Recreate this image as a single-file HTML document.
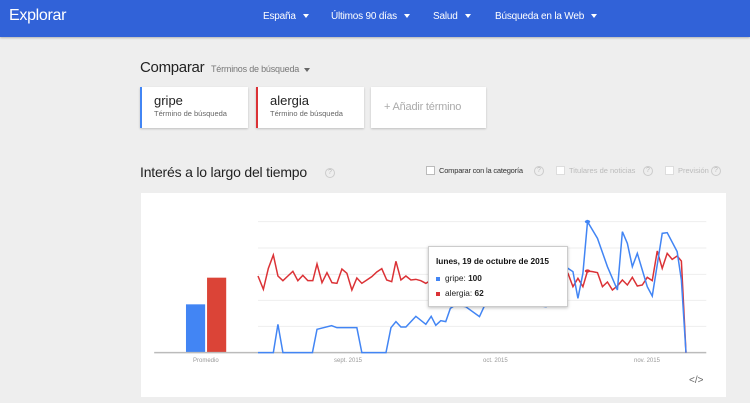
<!DOCTYPE html>
<html><head><meta charset="utf-8"><style>
*{margin:0;padding:0;box-sizing:border-box}
body{width:750px;height:403px;overflow:hidden;background:#eeeeee;font-family:"Liberation Sans",sans-serif;position:relative}
.hdr{position:absolute;left:0;top:0;width:750px;height:37px;background:#3162d8;box-shadow:0 1px 2px rgba(0,0,0,.25)}
.abs{position:absolute;white-space:nowrap}
.w{color:#fff}
.tri{display:inline-block;width:0;height:0;border-left:3px solid transparent;border-right:3px solid transparent;border-top:4px solid currentColor;vertical-align:middle;margin-left:7px}
.card{position:absolute;background:#fff;box-shadow:0 1px 2px rgba(0,0,0,.2)}
.q{position:absolute;width:10px;height:10px;border:1px solid #ccc;border-radius:50%;font-size:7px;color:#bbb;text-align:center;line-height:8px}
.cb{position:absolute;width:9px;height:9px;border:1px solid #bbb;background:#fff}
</style></head><body>
<div class="hdr"></div>
<div class="abs w" style="left:9px;top:7px;font-size:16px;letter-spacing:-0.3px">Explorar</div>
<div class="abs w" style="left:263px;top:11px;font-size:10px;letter-spacing:-0.2px">España<span class="tri"></span></div>
<div class="abs w" style="left:331px;top:11px;font-size:10px;letter-spacing:-0.2px">Últimos 90 días<span class="tri"></span></div>
<div class="abs w" style="left:433px;top:11px;font-size:10px;letter-spacing:-0.2px">Salud<span class="tri"></span></div>
<div class="abs w" style="left:495px;top:11px;font-size:10px;letter-spacing:-0.2px">Búsqueda en la Web<span class="tri"></span></div>

<div class="abs" style="left:140px;top:59px;font-size:15px;color:#222;letter-spacing:-0.3px">Comparar</div>
<div class="abs" style="left:211px;top:64px;font-size:9px;color:#777;letter-spacing:-0.2px">Términos de búsqueda<span class="tri" style="color:#666;margin-left:5px"></span></div>

<div class="card" style="left:140px;top:87px;width:108px;height:41px;border-left:2px solid #4285f4"></div>
<div class="abs" style="left:154px;top:93px;font-size:13px;color:#222">gripe</div>
<div class="abs" style="left:154px;top:109px;font-size:7.5px;color:#666">Término de búsqueda</div>
<div class="card" style="left:256px;top:87px;width:108px;height:41px;border-left:2px solid #db3236"></div>
<div class="abs" style="left:270px;top:93px;font-size:13px;color:#222">alergia</div>
<div class="abs" style="left:270px;top:109px;font-size:7.5px;color:#666">Término de búsqueda</div>
<div class="card" style="left:371px;top:87px;width:115px;height:41px"></div>
<div class="abs" style="left:384px;top:101px;font-size:11px;color:#aaa;letter-spacing:-0.2px">+ Añadir término</div>

<div class="abs" style="left:140px;top:164px;font-size:14px;color:#222;letter-spacing:-0.2px">Interés a lo largo del tiempo</div>
<div class="q" style="left:325px;top:168px">?</div>
<div class="cb" style="left:426px;top:166px"></div>
<div class="abs" style="left:439px;top:166px;font-size:7.5px;color:#333;letter-spacing:-0.2px">Comparar con la categoría</div>
<div class="q" style="left:534px;top:166px">?</div>
<div class="cb" style="left:556px;top:166px;border-color:#ddd"></div>
<div class="abs" style="left:569px;top:166px;font-size:7.5px;color:#bbb">Titulares de noticias</div>
<div class="q" style="left:643px;top:166px">?</div>
<div class="cb" style="left:665px;top:166px;border-color:#ddd"></div>
<div class="abs" style="left:678px;top:166px;font-size:7.5px;color:#bbb">Previsión</div>
<div class="q" style="left:711px;top:166px">?</div>

<div class="card" style="left:141px;top:193px;width:585px;height:204px;box-shadow:none"></div>
<svg class="abs" style="left:140px;top:190px" width="600" height="210" viewBox="0 0 1566 630" preserveAspectRatio="none">
<g stroke="#eee" stroke-width="1">
<line x1="308" y1="95" x2="1478" y2="95" vector-effect="non-scaling-stroke"/>
<line x1="308" y1="174" x2="1478" y2="174" vector-effect="non-scaling-stroke"/>
<line x1="308" y1="253" x2="1478" y2="253" vector-effect="non-scaling-stroke"/>
<line x1="308" y1="331" x2="1478" y2="331" vector-effect="non-scaling-stroke"/>
<line x1="308" y1="409" x2="1478" y2="409" vector-effect="non-scaling-stroke"/>
</g>
<rect x="120" y="343" width="50" height="145" fill="#4285f4"/>
<rect x="175" y="263" width="50" height="225" fill="#db4437"/>
<line x1="37" y1="488" x2="1478" y2="488" stroke="#bbb" stroke-width="1.5" vector-effect="non-scaling-stroke"/>
<polyline fill="none" stroke="#db3236" stroke-width="1.5" vector-effect="non-scaling-stroke" points="308,258 322,298 335,235 348,195 360,258 373,272 386,258 399,244 412,272 425,256 438,272 451,272 462,222 475,278 488,248 501,278 514,280 527,237 540,250 553,300 566,264 579,280 592,270 605,260 618,246 631,236 644,270 657,275 668,214 681,270 694,258 707,270 720,268 733,272 746,280 760,270 800,255 850,262 900,258 950,265 1000,255 1050,262 1100,250 1117,250 1130,290 1143,265 1156,290 1168,243 1181,245 1194,248 1207,290 1220,276 1233,300 1246,288 1259,270 1272,285 1285,262 1298,288 1311,285 1324,262 1337,272 1350,183 1363,235 1376,190 1389,208 1402,198 1413,213 1425,488"/>
<polyline fill="none" stroke="#4285f4" stroke-width="1.5" vector-effect="non-scaling-stroke" points="308,488 348,488 360,403 373,488 450,488 462,418 500,407 514,413 566,413 579,488 642,488 655,413 668,395 681,411 694,411 720,379 746,403 760,379 772,406 785,392 798,395 810,355 823,345 850,350 886,380 900,345 1000,340 1060,350 1117,235 1130,245 1143,325 1156,250 1168,95 1194,145 1220,230 1246,300 1259,125 1272,160 1285,230 1298,190 1324,290 1337,318 1363,130 1376,128 1402,185 1413,270 1425,488"/>
<ellipse cx="1168" cy="95" rx="7" ry="5" fill="#4285f4"/>
<ellipse cx="1168" cy="243" rx="7" ry="5" fill="#db3236"/>
</svg>
<div class="abs" style="left:193px;top:358px;font-size:6px;color:#999">Promedio</div>
<div class="abs" style="left:334px;top:358px;font-size:6px;color:#999">sept. 2015</div>
<div class="abs" style="left:483px;top:358px;font-size:6px;color:#999">oct. 2015</div>
<div class="abs" style="left:634px;top:358px;font-size:6px;color:#999">nov. 2015</div>
<div class="abs" style="left:689px;top:375px;font-size:10px;color:#666">&lt;/&gt;</div>

<div class="abs" style="left:428px;top:246px;width:140px;height:61px;background:#fff;border:1px solid #ccc;box-shadow:0 1px 3px rgba(0,0,0,.25)"></div>
<div class="abs" style="left:436px;top:256px;font-size:8.3px;font-weight:bold;color:#111">lunes, 19 de octubre de 2015</div>
<div class="abs" style="left:436px;top:273px;font-size:8.3px;color:#222"><span style="display:inline-block;width:4px;height:4px;background:#4285f4;margin-right:5px;vertical-align:middle"></span>gripe: <b>100</b></div>
<div class="abs" style="left:436px;top:288px;font-size:8.3px;color:#222"><span style="display:inline-block;width:4px;height:4px;background:#db3236;margin-right:5px;vertical-align:middle"></span>alergia: <b>62</b></div>
</body></html>
